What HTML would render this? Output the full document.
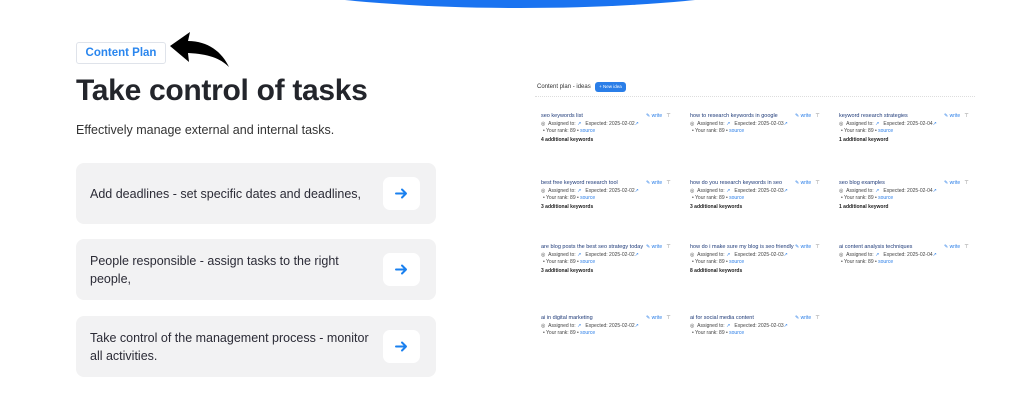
<!DOCTYPE html>
<html><head><meta charset="utf-8"><style>
*{margin:0;padding:0;box-sizing:border-box}
body{width:1024px;height:420px;background:#fff;position:relative;overflow:hidden;font-family:"Liberation Sans",sans-serif}
.arc{position:absolute;left:225px;top:-74px;width:590px;height:82px;border-radius:50%;background:#1a73f0}
.tag{position:absolute;left:76px;top:42px;width:90px;height:22px;border:1px solid #dfe3ea;border-radius:3px;color:#2a86ee;font-size:11.5px;font-weight:bold;text-align:center;line-height:20px}
h1{position:absolute;left:76px;top:74px;font-size:30px;font-weight:bold;color:#23252b;letter-spacing:-0.3px}
.sub{position:absolute;left:76px;top:123px;font-size:12.5px;color:#333}
.card{position:absolute;left:76px;width:360px;height:61px;background:#f2f2f3;border-radius:8px;font-size:12.5px;color:#2b2b36;line-height:18px}
.card span{position:absolute;left:14px;top:50%;transform:translateY(-50%);width:285px}
.btn{position:absolute;left:307px;top:14px;width:37px;height:33px;background:#fff;border-radius:7px}
.btn svg{position:absolute;left:12px;top:10px}
.sc{position:absolute;font-size:5px;color:#444}
.t{color:#1e3a78;font-size:5.5px}
.w{position:absolute;font-size:5px;color:#2a7ee8}
.b{font-weight:bold;color:#222}
</style></head><body>
<div class="arc"></div>
<div class="tag">Content Plan</div>
<svg style="position:absolute;left:168px;top:32px" width="64" height="36" viewBox="0 0 64 36"><path d="M2 14 L22 0 L20 9 C40 9 54 20 61 35 C52 26 40 22 20 21 L21 30 Z" fill="#000"/></svg>
<h1>Take control of tasks</h1>
<div class="sub">Effectively manage external and internal tasks.</div>
<div class="card" style="top:163px"><span>Add deadlines - set specific dates and deadlines,</span><div class="btn"><svg width="13" height="13" viewBox="0 0 13 13"><path d="M1 6.5H11M7 2.5L11 6.5L7 10.5" stroke="#1a80ef" stroke-width="2" fill="none" stroke-linecap="round" stroke-linejoin="round"/></svg></div></div>
<div class="card" style="top:239px"><span>People responsible - assign tasks to the right people,</span><div class="btn"><svg width="13" height="13" viewBox="0 0 13 13"><path d="M1 6.5H11M7 2.5L11 6.5L7 10.5" stroke="#1a80ef" stroke-width="2" fill="none" stroke-linecap="round" stroke-linejoin="round"/></svg></div></div>
<div class="card" style="top:316px"><span>Take control of the management process - monitor all activities.</span><div class="btn"><svg width="13" height="13" viewBox="0 0 13 13"><path d="M1 6.5H11M7 2.5L11 6.5L7 10.5" stroke="#1a80ef" stroke-width="2" fill="none" stroke-linecap="round" stroke-linejoin="round"/></svg></div></div>

<div class="sc" style="left:537px;top:84px;font-size:6px;color:#333">Content plan - ideas</div>
<div style="position:absolute;left:595px;top:82px;width:31px;height:10px;background:#2a7ee8;border-radius:3px;color:#fff;font-size:4.5px;text-align:center;line-height:10px">+ New idea</div>
<div style="position:absolute;left:535px;top:96px;width:440px;border-top:1px dotted #ddd"></div>

<div id="g"></div>
<script>
var rows=[[113,["seo keywords list","how to research keywords in google","keyword research strategies"],["4 additional keywords","","1 additional keyword"]],
[180,["best free keyword research tool","how do you research keywords in seo","seo blog examples"],["3 additional keywords","3 additional keywords","1 additional keyword"]],
[244,["are blog posts the best seo strategy today","how do i make sure my blog is seo friendly","ai content analysis techniques"],["3 additional keywords","8 additional keywords",""]],
[315,["ai in digital marketing","ai for social media content",""],["","",""]]];
var xs=[541,690,839],h="";
rows.forEach(function(r){for(var i=0;i<3;i++){if(!r[1][i])continue;var x=xs[i],y=r[0];
h+='<div class="sc t" style="left:'+x+'px;top:'+y+'px">'+r[1][i]+'</div>';
h+='<div class="w" style="left:'+(x+105)+'px;top:'+y+'px">✎ write &nbsp;&nbsp;<span style="color:#777">⊤</span></div>';
h+='<div class="sc" style="left:'+x+'px;top:'+(y+8)+'px">◎ &nbsp;Assigned to: <span style="color:#2a7ee8">↗</span> &nbsp; Expected: 2025-02-0'+(i+2)+'<span style="color:#2a7ee8">↗</span></div>';
h+='<div class="sc" style="left:'+(x+2)+'px;top:'+(y+15)+'px">• Your rank: 89 • <span style="color:#2a7ee8">source</span></div>';
if(r[2][i])h+='<div class="sc b" style="left:'+x+'px;top:'+(y+24)+'px">'+r[2][i]+'</div>';}});
document.getElementById('g').innerHTML=h;
</script>
</body></html>
